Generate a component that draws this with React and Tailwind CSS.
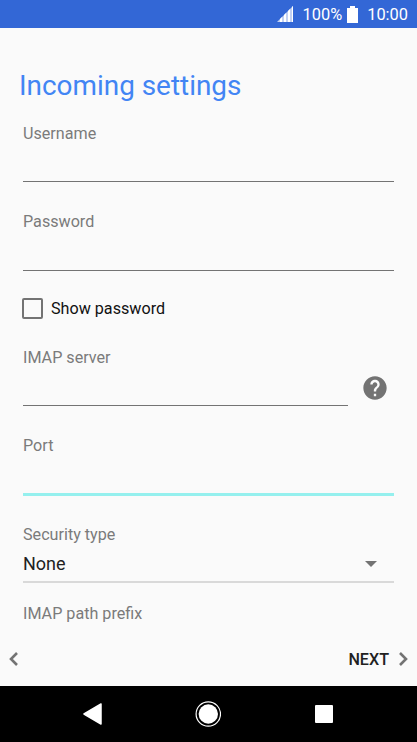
import React, { useState } from "react";

const labelClass = "block h-5 text-[16.15px] leading-5 text-[#7b7b7b] whitespace-nowrap";
const inputClass = "block w-full bg-transparent text-[18px] text-[#212121] outline-none";

function StatusBar() {
  return (
    <header className="flex h-7 shrink-0 items-center justify-end bg-[#3367d6] pr-[9px] text-[16.4px] leading-7 text-white">
      <svg width="17" height="16" viewBox="0 0 17 16" className="mr-[9px]">
        <path d="M0 16L16 0V16Z" fill="#fff" fillOpacity="0.7" />
        <path d="M3 16v-3l2-2v5zM7 16V9l2-2v9zM11 16V5l2-2v13zM15 16V1l1-1v16z" fill="#fff" />
      </svg>
      <span className="pt-0.5">100%</span>
      <svg width="11" height="17" viewBox="0 0 11 17" className="ml-[5px] mr-[9px]">
        <path d="M3 0h5v2h3v15H0V2h3z" fill="#fff" />
      </svg>
      <span className="pt-0.5">10:00</span>
    </header>
  );
}

function Field({ id, label, type = "text", labelPad = "", lineClass = "h-[39px] border-b border-[#737373]" }) {
  const [value, setValue] = useState("");

  return (
    <div>
      <label htmlFor={id} className={labelClass + " " + labelPad}>
        {label}
      </label>
      <div className={lineClass}>
        <input
          id={id}
          type={type}
          value={value}
          onChange={e => setValue(e.target.value)}
          className={inputClass + " h-full"}
        />
      </div>
    </div>
  );
}

function App() {
  const [showPassword, setShowPassword] = useState(false);

  return (
    <div className="flex h-[742px] w-[417px] flex-col overflow-hidden bg-[#fafafa] font-['Roboto',sans-serif]">
      <StatusBar />

      <main className="flex-1 pl-[23px] pr-[23px]">
        <h1 className="-ml-1 mt-[39px] h-9 whitespace-nowrap pt-px text-[27.9px] leading-9 text-[#4285f4]">
          Incoming settings
        </h1>

        <form className="mt-5">
          <Field id="username" label="Username" labelPad="pt-px" />
          <div className="mt-[30px]">
            <Field
              id="password"
              label="Password"
              type={showPassword ? "text" : "password"}
            />
          </div>

          {/* Show password */}
          <label className="-ml-px mt-[26px] flex h-[22px] items-center text-[16.15px] text-[#111]">
            <input
              type="checkbox"
              checked={showPassword}
              onChange={e => setShowPassword(e.target.checked)}
              className="mr-2 size-[21px] appearance-none rounded-[2px] border-2 border-[#737373] checked:bg-[#737373]"
            />
            <span className="pt-0.5">Show password</span>
          </label>

          {/* Server with help icon */}
          <div className="mt-7 flex">
            <div className="w-[325px]">
              <Field id="server" label="IMAP server" labelPad="pt-px" />
            </div>
            <svg width="28" height="28" viewBox="0 0 24 24" className="ml-[13px] mt-[27px]">
              <path
                fill="#737373"
                d="M12 2C6.48 2 2 6.48 2 12s4.48 10 10 10 10-4.48 10-10S17.52 2 12 2zm1 17h-2v-2h2v2zm2.07-7.75l-.9.92C13.45 12.9 13 13.5 13 15h-2v-.5c0-1.1.45-2.1 1.17-2.83l1.24-1.26c.37-.36.59-.86.59-1.41 0-1.1-.9-2-2-2s-2 .9-2 2H8c0-2.21 1.79-4 4-4s4 1.79 4 4c0 .88-.36 1.68-.93 2.25z"
              />
            </svg>
          </div>

          <div className="mt-[30px]">
            <Field id="port" label="Port" lineClass="h-10 border-b-[3px] border-[#95f0ee]" />
          </div>

          {/* Security type */}
          <div className="mt-7">
            <span className={labelClass + " pt-px"}>Security type</span>
            <div className="flex h-[39px] items-center justify-between border-b-2 border-[#d9d9d9] pr-[17px] pt-0.5">
              <span className="text-[18px] text-[#212121]">None</span>
              <svg width="12" height="6" viewBox="0 0 12 6">
                <path d="M0 0h12L6 6z" fill="#737373" />
              </svg>
            </div>
          </div>

          <span className={labelClass + " mt-5 pt-px"}>IMAP path prefix</span>
        </form>
      </main>

      <footer className="flex h-[54px] shrink-0 items-center justify-between pl-[9px] pr-[9px]">
        <button aria-label="Back">
          <svg width="9" height="14" viewBox="0 0 9 14" fill="none" stroke="#737373" strokeWidth="2.6">
            <path d="M8 1L2 7l6 6" />
          </svg>
        </button>
        <button className="flex items-center gap-2.5 text-[16.15px] font-medium text-[#212121]">
          <span className="pt-0.5">NEXT</span>
          <svg width="9" height="14" viewBox="0 0 9 14" fill="none" stroke="#737373" strokeWidth="2.6">
            <path d="M1 1l6 6-6 6" />
          </svg>
        </button>
      </footer>

      {/* System navigation */}
      <nav className="flex h-14 shrink-0 items-center bg-black pl-[83px]">
        <svg width="19" height="22" viewBox="0 0 19 22">
          <path d="M18 1v20L1 11z" fill="#fff" stroke="#fff" strokeWidth="1.5" strokeLinejoin="round" />
        </svg>
        <svg width="26" height="26" viewBox="0 0 26 26" className="ml-[93px]">
          <circle cx="13.3" cy="13" r="12.2" fill="none" stroke="#fff" strokeWidth="1.2" />
          <circle cx="13.3" cy="13" r="9.7" fill="#fff" />
        </svg>
        <div className="ml-[94px] size-[18px] rounded-[1px] bg-white" />
      </nav>
    </div>
  );
}

export default App;
